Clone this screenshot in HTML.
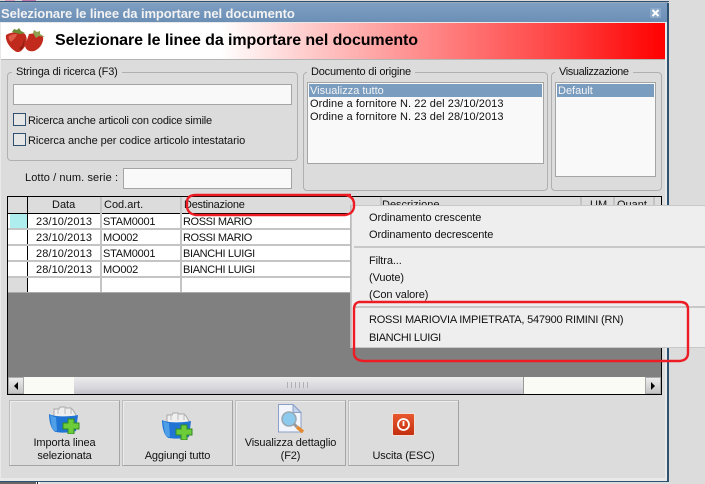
<!DOCTYPE html>
<html><head><meta charset="utf-8">
<style>
*{box-sizing:border-box}
html,body{margin:0;padding:0}
body{width:705px;height:484px;overflow:hidden;position:relative;background:#dcdcdc;font-family:"Liberation Sans",sans-serif;font-size:11px;color:#111}
.a{position:absolute}
.t{position:absolute;white-space:nowrap;line-height:13px;font-size:11px}
.gb{position:absolute;border:1px solid #b0b0b0;border-radius:4px}
.leg{position:absolute;background:#dcdcdc;padding:0 4px;white-space:nowrap;line-height:13px;top:-7px}
.inp{position:absolute;background:#f9f9f9;border:1px solid #a4a4a4}
.cb{position:absolute;width:13px;height:13px;border:1px solid #2f4f70;background:#e6e6e6}
.sel{position:absolute;background:#7a9cbf;height:13px}
.btn{position:absolute;top:400px;height:66px;width:111px;background:#dcdcdc;border:1px solid #bcbcbc;border-right-color:#a4a4a4;border-bottom-color:#a4a4a4;box-shadow:inset 1px 1px 0 #ececec}
.btn .l{position:absolute;left:0;right:0;text-align:center;line-height:13px;white-space:nowrap;letter-spacing:-.12px}
.hl{position:absolute;background:#c4c4c4;height:2px;left:8px;width:342px}
.vl{position:absolute;background:#c4c4c4;width:2px;top:197px;height:96px}
.sp{position:absolute;left:369px;white-space:nowrap;line-height:13px;letter-spacing:-.1px}
</style></head><body>
<div class="a" style="left:5px;top:0;width:10px;height:1px;background:#d9a0c0"></div>
<div class="a" style="left:22px;top:0;width:14px;height:1px;background:#c47ab0"></div>
<div class="a" style="left:0;top:1px;width:669px;height:1px;background:#2f4f70"></div>
<div class="a" style="left:0;top:2px;width:668px;height:1px;background:#9ab"></div>
<!-- window -->
<div class="a" style="left:0;top:3px;width:669px;height:479px;background:#e9e9e9;border-right:2px solid #2f5270;border-bottom:1px solid #2f5270"></div>
<div class="a" style="left:0;top:3px;width:667px;height:19px;background:linear-gradient(#7f9fc2,#6c8fb6)"></div>
<div class="a" style="left:1px;top:6px;font-weight:bold;font-size:13px;line-height:15px;color:#f2f2f2;white-space:nowrap;letter-spacing:-.1px">Selezionare le linee da importare nel documento</div>
<div class="a" style="left:650px;top:8px;width:11px;height:10px;background:#8aa8c8;border-radius:1px"></div>
<svg class="a" style="left:650px;top:8px" width="11" height="10"><path d="M2.500 2L8.500 8M8.500 2L2.500 8" stroke="#fff" stroke-width="2"/></svg>
<!-- banner -->
<div class="a" style="left:1px;top:23px;width:664px;height:36px;background:linear-gradient(90deg,#fff 0,#fff 33%,#ffd0d0 45%,#ff9090 62%,#ff4a4a 82%,#f00 100%)"></div>
<div class="a" style="left:1px;top:59px;width:664px;height:1px;background:#b4b4b4"></div>
<svg class="a" style="left:5px;top:26px" width="40" height="28" viewBox="0 0 40 28">
<path d="M24 8c5-1 12-1 14 3 1 5-3 12-9 14-5 1-8-1-9-5z" fill="#c22a1e"/>
<path d="M1 9c4-3 14-4 19-1 3 4 2 11-2 15-2 3-6 4-8 2C5 22 0 15 1 9z" fill="#bf2a1c"/>
<path d="M4 10c3-2 6-2 8-2-1 4-4 6-6 8-2-2-3-4-2-6z" fill="#df5a48"/>
<path d="M14 22c3-1 5-5 5-10 1 4 0 9-3 12z" fill="#8c1a12"/>
<path d="M7 6l2-3 3 1 2-2 2 3 4 2-5 1-4-1z" fill="#6d8a34"/>
<path d="M28 7l1-3 3 2 3-1 0 3 5 3-6-1-3 2z" fill="#8fa050"/>
</svg>
<div class="a" style="left:55px;top:31px;font-weight:bold;font-size:16px;line-height:19px;color:#000;white-space:nowrap;letter-spacing:-.09px">Selezionare le linee da importare nel documento</div>
<!-- content bg -->
<div class="a" style="left:1px;top:60px;width:664px;height:418px;background:#dcdcdc"></div>
<!-- group 1 -->
<div class="gb" style="left:7px;top:72px;width:291px;height:89px"><div class="leg" style="left:4px;letter-spacing:-.18px">Stringa di ricerca (F3)</div></div>
<div class="inp" style="left:13px;top:84px;width:279px;height:21px"></div>
<div class="cb" style="left:13px;top:113px"></div>
<div class="t" style="left:28px;top:115px;letter-spacing:-.2px">Ricerca anche articoli con codice simile</div>
<div class="cb" style="left:13px;top:133px"></div>
<div class="t" style="left:28px;top:135px;letter-spacing:-.05px">Ricerca anche per codice articolo intestatario</div>
<div class="t" style="left:25px;top:172px;letter-spacing:.1px">Lotto / num. serie :</div>
<div class="inp" style="left:123px;top:168px;width:169px;height:21px"></div>
<!-- group 2 -->
<div class="gb" style="left:303px;top:72px;width:245px;height:119px"><div class="leg" style="left:3px;letter-spacing:-.2px">Documento di origine</div></div>
<div class="inp" style="left:307px;top:82px;width:237px;height:82px"></div>
<div class="sel" style="left:309px;top:84px;width:233px"></div>
<div class="t" style="left:310px;top:85px;color:#f4f4f4">Visualizza tutto</div>
<div class="t" style="left:310px;top:98px;letter-spacing:.07px">Ordine a fornitore N. 22 del 23/10/2013</div>
<div class="t" style="left:310px;top:111px;letter-spacing:.07px">Ordine a fornitore N. 23 del 28/10/2013</div>
<!-- group 3 -->
<div class="gb" style="left:551px;top:72px;width:111px;height:119px"><div class="leg" style="left:3px;letter-spacing:-.4px">Visualizzazione</div></div>
<div class="inp" style="left:555px;top:82px;width:101px;height:95px"></div>
<div class="sel" style="left:557px;top:84px;width:97px"></div>
<div class="t" style="left:558px;top:85px;color:#f4f4f4">Default</div>
<!-- grid -->
<div class="a" style="left:7px;top:196px;width:655px;height:199px;background:#808080;border:1px solid #000"></div>
<div class="a" style="left:8px;top:197px;width:653px;height:16px;background:#dcdcdc"></div>
<div class="a" style="left:8px;top:213px;width:653px;height:1px;background:#000"></div>
<div class="a" style="left:28px;top:214px;width:633px;height:79px;background:#fff"></div>
<div class="a" style="left:8px;top:214px;width:19px;height:79px;background:#fff"></div>
<div class="a" style="left:8px;top:277px;width:19px;height:16px;background:#dcdcdc"></div>
<div class="a" style="left:10px;top:214px;width:17px;height:14px;background:#aeeeee"></div>
<div class="a" style="left:27px;top:197px;width:1px;height:96px;background:#000"></div>
<div class="vl" style="left:100px"></div>
<div class="vl" style="left:180px"></div>
<div class="vl" style="left:380px;height:16px"></div>
<div class="vl" style="left:580px;height:16px"></div>
<div class="vl" style="left:613px;height:16px"></div>
<div class="vl" style="left:653px;height:16px"></div>
<div class="hl" style="top:228px"></div>
<div class="hl" style="top:244px"></div>
<div class="hl" style="top:260px"></div>
<div class="hl" style="top:276px"></div>
<div class="a" style="left:8px;top:292px;width:653px;height:1px;background:#aaa"></div>
<div class="t" style="left:52px;top:199px">Data</div>
<div class="t" style="left:104px;top:199px">Cod.art.</div>
<div class="t" style="left:184px;top:199px;letter-spacing:-.25px">Destinazione</div>
<div class="t" style="left:382px;top:199px">Descrizione</div>
<div class="t" style="left:590px;top:199px">UM</div>
<div class="t" style="left:617px;top:199px">Quant.</div>
<div class="t" style="left:36px;top:216px;letter-spacing:.1px">23/10/2013</div><div class="t" style="left:103px;top:216px;letter-spacing:-.25px">STAM0001</div><div class="t" style="left:183px;top:216px;letter-spacing:-.4px">ROSSI MARIO</div>
<div class="t" style="left:36px;top:232px;letter-spacing:.1px">23/10/2013</div><div class="t" style="left:103px;top:232px;letter-spacing:-.2px">MO002</div><div class="t" style="left:183px;top:232px;letter-spacing:-.4px">ROSSI MARIO</div>
<div class="t" style="left:36px;top:248px;letter-spacing:.1px">28/10/2013</div><div class="t" style="left:103px;top:248px;letter-spacing:-.25px">STAM0001</div><div class="t" style="left:183px;top:248px;letter-spacing:-.35px">BIANCHI LUIGI</div>
<div class="t" style="left:36px;top:264px;letter-spacing:.1px">28/10/2013</div><div class="t" style="left:103px;top:264px;letter-spacing:-.2px">MO002</div><div class="t" style="left:183px;top:264px;letter-spacing:-.35px">BIANCHI LUIGI</div>
<!-- scrollbar -->
<div class="a" style="left:8px;top:377px;width:653px;height:17px;background:#fbfbf6"></div>
<div class="a" style="left:8px;top:377px;width:16px;height:17px;background:linear-gradient(#ececec,#c4c4c4);border:1px solid #aaa"></div>
<svg class="a" style="left:13px;top:382px" width="6" height="8"><path d="M5 0V8L1 4z" fill="#000"/></svg>
<div class="a" style="left:74px;top:377px;width:450px;height:17px;background:linear-gradient(#ececec,#d8d8de 60%,#c2c2c8);border-right:1px solid #999"></div>
<div class="a" style="left:287px;top:382px;width:22px;height:6px;background:repeating-linear-gradient(90deg,#b0b0b0 0 1px,transparent 1px 4px)"></div>
<div class="a" style="left:645px;top:377px;width:16px;height:17px;background:linear-gradient(#ececec,#c4c4c4);border:1px solid #aaa"></div>
<svg class="a" style="left:650px;top:382px" width="6" height="8"><path d="M1 0V8L5 4z" fill="#000"/></svg>
<!-- context menu -->
<div class="a" style="left:351px;top:205px;width:354px;height:143px;background:#eeeeee;border:1px solid #c8c8c8;border-right:0;box-shadow:-1px 0 0 #bbb"></div>
<div class="a" style="left:354px;top:246px;width:351px;height:2px;background:#c8c8c8"></div>
<div class="a" style="left:354px;top:306px;width:351px;height:2px;background:#c8c8c8"></div>
<div class="sp" style="top:212px">Ordinamento crescente</div>
<div class="sp" style="top:229px">Ordinamento decrescente</div>
<div class="sp" style="top:255px">Filtra...</div>
<div class="sp" style="top:272px">(Vuote)</div>
<div class="sp" style="top:289px">(Con valore)</div>
<div class="sp" style="top:314px;letter-spacing:-.22px">ROSSI MARIOVIA IMPIETRATA, 547900 RIMINI (RN)</div>
<div class="sp" style="top:332px;letter-spacing:-.35px">BIANCHI LUIGI</div>
<!-- red annotations -->
<svg class="a" style="left:0;top:0" width="705" height="484" fill="none" stroke="#ed1c24" stroke-width="2.400">
<path d="M351 195H196q-8 0-9 6v6q1 7 9 8H345q8-1 9-8v-4q-1-7-9-8"/>
<path d="M359 302H680q8 0 8 7v44q0 7-8 8H363q-9-1-9-8v-44q0-6 5-7z"/>
</svg>
<!-- buttons -->
<div class="btn" style="left:9px;top:400px"><div class="l" style="top:36px">Importa linea</div><div class="l" style="top:49px">selezionata</div></div>
<div class="btn" style="left:122px;top:400px"><div class="l" style="top:49px">Aggiungi tutto</div></div>
<div class="btn" style="left:235px;top:400px"><div class="l" style="top:36px">Visualizza dettaglio</div><div class="l" style="top:49px">(F2)</div></div>
<div class="btn" style="left:348px;top:400px"><div class="l" style="top:49px">Uscita (ESC)</div></div>
<!-- folder icons -->
<svg class="a" style="left:49px;top:405px" width="32" height="29" viewBox="0 0 32 29">
<path d="M5 4h5l1-2h5l1 1h5l2 2 3 5-1 6H5z" fill="#efefef" stroke="#a8a8a8"/>
<path d="M9 4v5M16 3v6M22 4v5" stroke="#bbb"/>
<path d="M0 9c6 3 20 3 29 1l-2 16c-6 2-14 2-20 1C2 26 0 15 0 9z" fill="#1f74d4"/>
<path d="M1 10c2 1 4 2 6 2l1 14c-3 0-4-1-5-3z" fill="#4f9fe8"/>
<path d="M19 14h6v4h5v6h-5v5h-6v-5h-5v-6h5z" fill="#6dcc3a" stroke="#2f8a22"/>
</svg>
<svg class="a" style="left:162px;top:411px" width="32" height="29" viewBox="0 0 32 29">
<path d="M5 4h5l1-2h5l1 1h5l2 2 3 5-1 6H5z" fill="#efefef" stroke="#a8a8a8"/>
<path d="M9 4v5M16 3v6M22 4v5" stroke="#bbb"/>
<path d="M0 9c6 3 20 3 29 1l-2 16c-6 2-14 2-20 1C2 26 0 15 0 9z" fill="#1f74d4"/>
<path d="M1 10c2 1 4 2 6 2l1 14c-3 0-4-1-5-3z" fill="#4f9fe8"/>
<path d="M19 14h6v4h5v6h-5v5h-6v-5h-5v-6h5z" fill="#6dcc3a" stroke="#2f8a22"/>
</svg>
<!-- doc icon -->
<svg class="a" style="left:278px;top:404px" width="27" height="30" viewBox="0 0 27 30">
<path d="M.5 .5H15l8 8V28H.5z" fill="#f2f5fc" stroke="#8aa0c8"/>
<path d="M15 .5V8.500H23z" fill="#c4d2ea" stroke="#8aa0c8"/>
<circle cx="11" cy="15" r="7" fill="#8ccaee" stroke="#9aa8b0" stroke-width="1.500"/>
<path d="M16 20l3 3" stroke="#999" stroke-width="3"/>
<path d="M19 23l6 5" stroke="#e58a30" stroke-width="3.500"/>
</svg>
<!-- exit icon -->
<div class="a" style="left:392px;top:413px;width:23px;height:23px;background:linear-gradient(#e8582e,#c43010);border-radius:2px;border:1px solid #f0e0d8"></div>
<svg class="a" style="left:392px;top:413px" width="23" height="23"><circle cx="11.500" cy="11.500" r="5.500" fill="none" stroke="#fff" stroke-width="1.800"/><path d="M11.500 8v5" stroke="#fff" stroke-width="1.800"/></svg>
<!-- bottom -->
<div class="a" style="left:0;top:482px;width:36px;height:2px;background:#666"></div>
<div class="a" style="left:36px;top:482px;width:4px;height:2px;background:#f4f4f4"></div>
<div class="a" style="left:37px;top:482px;width:1px;height:2px;background:#222"></div>
</body></html>
